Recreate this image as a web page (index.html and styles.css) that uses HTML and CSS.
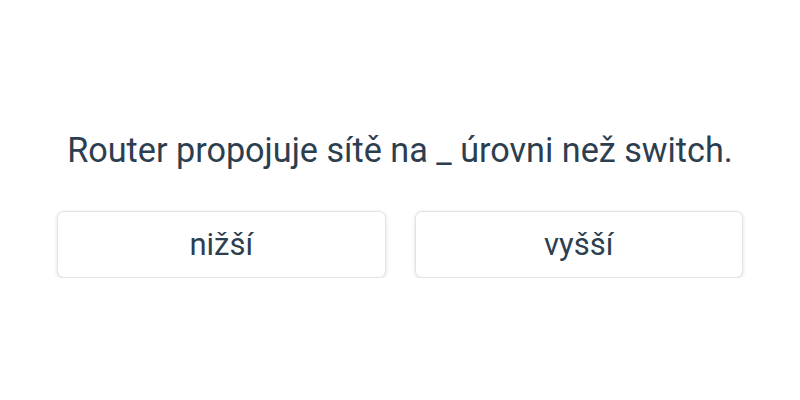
FILE: index.html
```html
<!DOCTYPE html>
<html lang="cs">
<head>
<meta charset="utf-8">
<link rel="stylesheet" href="styles.css">
</head>
<body>
<main class="quiz">
  <p class="question">Router propojuje sítě na _ úrovni než switch.</p>
  <div class="options">
    <button class="option">nižší</button>
    <button class="option">vyšší</button>
  </div>
</main>
</body>
</html>
```
FILE: styles.css
```css
html, body {
  margin: 0;
  padding: 0;
  background: #ffffff;
}
body {
  font-family: Roboto, "Noto Sans", sans-serif;
  color: #2c3e50;
}
.quiz {
  width: 686px;
  margin: 0 auto;
  padding-top: 126px;
  display: flex;
  flex-direction: column;
  align-items: center;
}
.question {
  margin: 0;
  font-size: 34.2px;
  line-height: 48px;
  text-align: center;
}
.options {
  margin-top: 37px;
  width: 100%;
  display: grid;
  grid-template-columns: 1fr 1fr;
  gap: 29px;
}
.option {
  height: 67px;
  font-family: inherit;
  font-size: 31px;
  color: #2c3e50;
  background: #ffffff;
  border: 1px solid #e0e2e5;
  border-radius: 7px;
  box-shadow: 0 1px 4px rgba(0,0,0,0.12);
  cursor: pointer;
}
```
